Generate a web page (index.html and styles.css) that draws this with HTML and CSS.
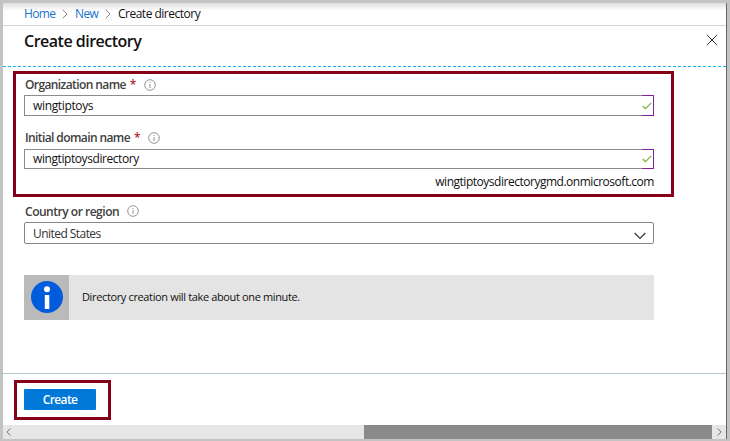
FILE: index.html
```html
<!DOCTYPE html>
<html lang="en">
<head>
<meta charset="utf-8">
<title>Create directory</title>
<link rel="stylesheet" href="styles.css">
</head>
<body>
<div class="window">
  <nav class="crumbs">
    <a class="home">Home</a>
    <svg class="sep" viewBox="0 0 6 10"><path d="M.7.7 5 5 .7 9.300"/></svg>
    <a class="new">New</a>
    <svg class="sep" viewBox="0 0 6 10"><path d="M.7.7 5 5 .7 9.300"/></svg>
    <span class="current">Create directory</span>
  </nav>
  <header class="head">
    <h1><span>Create directory</span></h1>
    <svg class="close" viewBox="0 0 12 12"><path d="M.8.8 11.200 11.200M11.200.8.8 11.200"/></svg>
  </header>
  <main>
    <section class="marked fields">
      <div class="label"><span class="l-org">Organization name</span><b>*</b><svg class="info" viewBox="0 0 12 12"><circle cx="6" cy="6" r="5.300"/><path d="M6 5v4M6 3v1"/></svg></div>
      <div class="input"><span class="v-org">wingtiptoys</span><i class="valid"><svg viewBox="0 0 10 8"><path d="M.7 4 3.500 6.700 9.300.8"/></svg></i></div>
      <div class="label second"><span class="l-domain">Initial domain name</span><b>*</b><svg class="info" viewBox="0 0 12 12"><circle cx="6" cy="6" r="5.300"/><path d="M6 5v4M6 3v1"/></svg></div>
      <div class="input short"><span class="v-domain">wingtiptoysdirectory</span><i class="valid"><svg viewBox="0 0 10 8"><path d="M.7 4 3.500 6.700 9.300.8"/></svg></i></div>
      <div class="suffix"><span>wingtiptoysdirectorygmd.onmicrosoft.com</span></div>
    </section>
    <section class="country">
      <div class="label"><span class="l-country">Country or region</span><svg class="info" viewBox="0 0 12 12"><circle cx="6" cy="6" r="5.300"/><path d="M6 5v4M6 3v1"/></svg></div>
      <div class="select"><span class="v-country">United States</span><svg viewBox="0 0 12 8"><path d="M.7 1 6 6.500 11.300 1"/></svg></div>
    </section>
    <section class="notice">
      <div class="notice-icon"><svg viewBox="0 0 32 32"><circle cx="16" cy="16" r="16"/><circle class="w" cx="16" cy="8.200" r="3"/><path class="w" d="M13.800 14h4.500v14h-4.500z"/></svg></div>
      <span class="notice-text">Directory creation will take about one minute.</span>
    </section>
  </main>
  <footer>
    <div class="marked action"><button><span>Create</span></button></div>
  </footer>
  <div class="scroll">
    <svg class="arrow" viewBox="0 0 5 8"><path d="M4.500.5.8 4 4.500 7.500"/></svg>
    <div class="thumb"></div>
    <svg class="arrow" viewBox="0 0 5 8"><path d="M.5.5 4.200 4 .5 7.500"/></svg>
  </div>
</div>
</body>
</html>
```
FILE: styles.css
```css
* { box-sizing: border-box; }
body { margin: 0; width: 730px; height: 441px; overflow: hidden; background: #c3c3c3; padding: 3px 3px 2px; font-family: "Open Sans", "Noto Sans", sans-serif; font-size: 12px; color: #111; }
svg { display: block; fill: none; stroke-width: 1; flex: none; }
span, a { white-space: nowrap; }
.window { width: 724px; height: 436px; background: #fff; border-right: 1px solid #666; display: flex; flex-direction: column; }
.crumbs { height: 23px; flex: none; display: flex; align-items: center; padding: 0 0 1px 21px; border-bottom: 1px solid #d2d2d2; background: linear-gradient(#dedede, #fff 8px); }
.crumbs a { color: #1874d0; }
.home { width: 39px; letter-spacing: -.65px; }
.new { width: 31px; margin-left: 7px; letter-spacing: -.65px; }
.current { margin-left: 7px; letter-spacing: -.5px; }
.sep { width: 6px; height: 10px; stroke: #858585; }
.home + .sep { margin-left: -1px; }
.new + .sep { margin-left: -1px; }
.head { height: 41px; flex: none; display: flex; justify-content: space-between; padding: 0 8px 0 21px; border-bottom: 1px dashed #16b5f0; }
h1 { margin: 0; font-size: 16px; line-height: 30px; font-weight: 600; letter-spacing: -.5px; }
.close { width: 12px; height: 12px; margin-top: 8px; stroke: #333; }
main { height: 306px; flex: none; padding: 4px 0 0 10px; }
.marked { border: 3px solid #850018; }
.fields { width: 661px; height: 126px; padding: 3px 17px 0 8px; }
.label { height: 18px; padding: 0 0 3px 1px; display: flex; align-items: center; font-weight: 600; color: #404040; font-size: 12px; }
.label b { color: #b0262e; margin-left: 4px; font-size: 12px; font-weight: 600; width: 6px; }
.info { width: 12px; height: 12px; stroke: #777; stroke-width: .8; margin-left: 8px; }
.label span { letter-spacing: -.6px; }
.label .l-country { letter-spacing: -.48px; }
.input { height: 21px; border: 1px solid #8c8c8c; display: flex; align-items: center; justify-content: space-between; padding-left: 8px; }
.second { margin-top: 13px; height: 20px; }
.short { height: 20px; }
.valid { width: 12px; height: calc(100% + 2px); margin: -1px -1px -1px 0; border: 1px solid #8220a0; border-left: 0; display: flex; align-items: center; }
.valid svg { width: 10px; height: 8px; stroke: #75b43b; stroke-width: 1.200; }
.v-org { letter-spacing: -.35px; margin-top: -1px; }
.v-domain { letter-spacing: -.42px; margin-top: -1px; }
.suffix { height: 26px; line-height: 26px; text-align: right; }
.suffix span { letter-spacing: -.48px; }
.country { width: 641px; padding: 6px 0 0 11px; }
.country .label { height: 19px; }
.select { height: 22px; border: 1px solid #858585; border-radius: 2px; display: flex; align-items: center; justify-content: space-between; padding: 0 7px 0 8px; color: #333; }
.v-country { letter-spacing: -.55px; }
.select svg { width: 12px; height: 8px; stroke: #333; margin-top: 5px; stroke-width: 1.200; }
.notice { width: 630px; height: 45px; margin: 31px 0 0 11px; background: #e4e4e4; display: flex; align-items: center; }
.notice-icon { width: 45px; height: 45px; background: #bababa; padding: 6px 0 0 7px; }
.notice-icon svg { width: 32px; height: 32px; fill: #005cdd; }
.notice-icon .w { fill: #fff; }
.notice-text { margin: -2px 0 0 13px; font-size: 11px; letter-spacing: -.36px; }
footer { height: 52px; flex: none; border-top: 1px solid #b2c9d2; padding: 6px 0 0 11px; }
.action { width: 97px; height: 40px; padding: 6px 0 0 7px; }
button { width: 72px; height: 21px; padding: 0; border: 0; border-radius: 1px; background: #0078d7; color: #fff; font: 600 12px/20px "Open Sans", sans-serif; letter-spacing: -.6px; display: block; }
.scroll { height: 14px; flex: none; background: #e6e6e6; display: flex; align-items: center; padding: 0 4px 0 3px; }
.arrow { width: 5px; height: 8px; stroke: #777; }
.thumb { width: 348px; height: 14px; background: #8a8a8a; margin: 0 5px 0 auto; }
```
